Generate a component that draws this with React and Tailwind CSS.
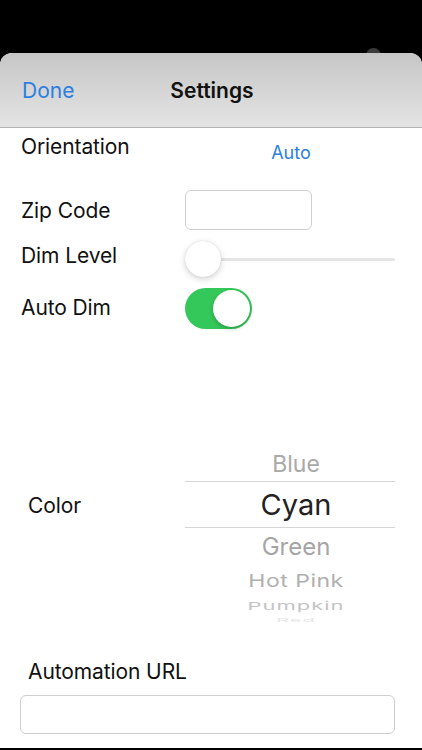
import React from "react";

const font = { fontFamily: "Inter, 'Liberation Sans', sans-serif" };

const Label = ({ children, className = "" }) => (
  <span className={`text-[21px] text-[#111] tracking-[-0.1px] ${className}`}>{children}</span>
);

const App = () => {
  return (
    <div className="w-[422px] h-[750px] bg-black flex flex-col overflow-hidden" style={font}>
      {/* status area */}
      <div className="h-[53px] shrink-0 relative">
        <div className="absolute left-[366px] top-[48px] w-[15px] h-[15px] rounded-full bg-[#3b3b3b]" />
      </div>

      {/* sheet */}
      <div className="relative flex-1 bg-white rounded-t-[12px] overflow-hidden flex flex-col">
        {/* nav bar */}
        <div className="h-[75px] shrink-0 flex items-center px-[22px] bg-gradient-to-b from-[#c6c6c6] to-[#e4e4e4] border-b border-[#b3b3b3]">
          <span className="w-[120px] text-[21px] text-[#2a7fe0] pt-[2px]">Done</span>
          <span className="flex-1 text-center pr-[120px] text-[21px] font-semibold text-[#111] pt-[2px] pl-[2px]">
            Settings
          </span>
        </div>

        {/* orientation */}
        <div className="h-[38px] flex items-center">
          <Label className="pl-[21px] w-[185px]">Orientation</Label>
          <span className="w-[210px] text-center text-[18px] text-[#2a7fe0] pt-[11px] pl-[2px]">Auto</span>
        </div>

        {/* zip code */}
        <div className="h-[40px] mt-[24px] flex items-center">
          <Label className="pl-[21px] w-[185px] pt-[1px]">Zip Code</Label>
          <div className="w-[127px] h-[40px] rounded-[6px] border border-[#cfcfcf]" />
        </div>

        {/* dim level */}
        <div className="h-[40px] mt-[9px] flex items-center">
          <Label className="pl-[21px] w-[185px] -mt-[6px]">Dim Level</Label>
          <div className="relative w-[210px] h-[40px] flex items-center">
            <div className="ml-[17px] flex-1 h-[3px] rounded-full bg-[#e4e4e4]" />
            <div className="absolute left-0 top-[2px] w-[36px] h-[36px] rounded-full bg-white shadow-[0_2px_6px_rgba(0,0,0,0.18),0_0_1px_rgba(0,0,0,0.2)]" />
          </div>
        </div>

        {/* auto dim */}
        <div className="h-[40px] mt-[9px] flex items-center">
          <Label className="pl-[21px] w-[185px]">Auto Dim</Label>
          <div className="w-[67px] h-[41px] rounded-full bg-[#34c759] flex items-center justify-end pr-[2px]">
            <div className="w-[37px] h-[37px] rounded-full bg-white shadow-[0_2px_4px_rgba(0,0,0,0.2)]" />
          </div>
        </div>

        {/* color picker */}
        <div className="mt-[117px] flex items-start">
          <div className="w-[185px] h-[30px] mt-[46px] pl-[28px] flex items-center">
            <Label>Color</Label>
          </div>
          <div className="w-[210px] flex flex-col items-center text-center">
            <div className="h-[36px] w-full flex items-center justify-center text-[23px] text-[#a9a9a9] pl-[12px] pt-[2px]">
              Blue
            </div>
            <div className="h-[47px] w-full border-t border-b border-[#d6d6d6] flex items-center justify-center text-[29px] text-[#222] pl-[12px] pt-[1px]">
              Cyan
            </div>
            <div className="h-[38px] w-full flex items-center justify-center text-[24px] text-[#a5a5a5] pl-[12px]">
              Green
            </div>
            <div className="h-[30px] w-full flex items-center justify-center pl-[12px]">
              <span className="text-[23px] text-[#b0b0b0] scale-y-[0.75] tracking-[0.5px]">Hot Pink</span>
            </div>
            <div className="h-[20px] w-full flex items-center justify-center pl-[12px]">
              <span className="text-[22px] text-[#c4c4c4] scale-y-[0.5] tracking-[1px]">Pumpkin</span>
            </div>
            <div className="h-[8px] w-full flex items-center justify-center overflow-hidden pl-[12px]">
              <span className="text-[20px] text-[#e6e6e6] scale-y-[0.25] tracking-[1px]">Red</span>
            </div>
          </div>
        </div>

        {/* automation url */}
        <div className="mt-[33px] pl-[28px] h-[30px] flex items-center">
          <Label>Automation URL</Label>
        </div>
        <div className="mt-[8px] mx-[20px] w-[375px] h-[39px] rounded-[6px] border border-[#cfcfcf]" />
      </div>
      <div className="h-[2px] shrink-0 bg-black" />
    </div>
  );
};

export default App;
